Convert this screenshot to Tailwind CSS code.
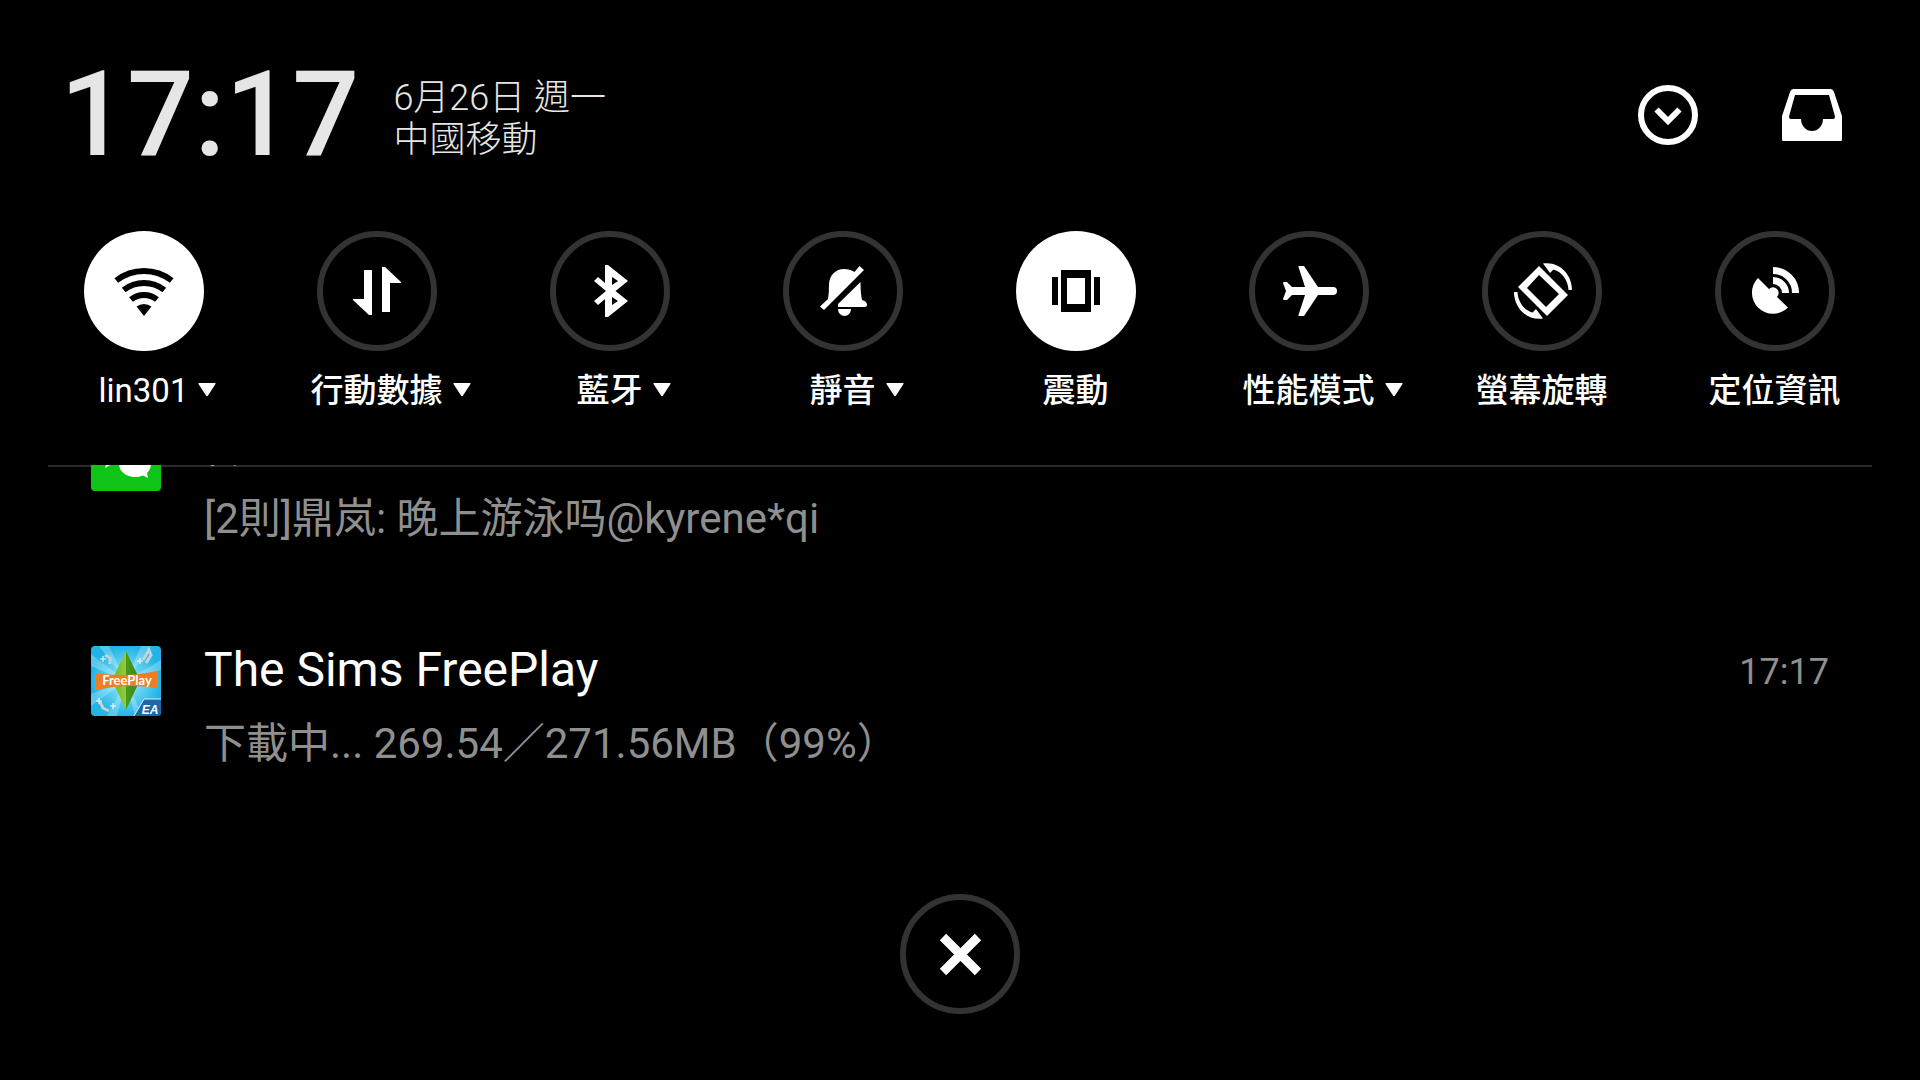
<!DOCTYPE html>
<html lang="zh-Hant">
<head>
    <meta charset="UTF-8">
    <meta name="viewport" content="width=device-width, initial-scale=1.0">
    <title>通知中心</title>
    <script src="https://cdn.jsdelivr.net/npm/@tailwindcss/browser@4"></script>
</head>
<body class="bg-black text-white font-[Roboto,'Noto_Sans_CJK_TC',sans-serif]">
    <div class="flex flex-col w-full min-h-screen overflow-hidden">

        <!-- Header -->
        <header class="flex items-center justify-between h-[231px] pl-[60px] pr-[78px] pb-0.5">
            <div class="flex items-center gap-[34px]">
                <time class="text-[118px] leading-[140px] font-medium text-[#e6e6e6]">17:17</time>
                <div class="pt-2 text-[36px] leading-[42px] font-light text-[#e6e6e6]">
                    <p>6月26日 週一</p>
                    <p>中國移動</p>
                </div>
            </div>
            <div class="flex items-center gap-[84px]">
                <button aria-label="展開">
                    <svg class="block w-[60px] h-[60px]" viewBox="0 0 60 60" fill="none" stroke="#fff" stroke-width="6">
                        <circle cx="30" cy="30" r="27"/>
                        <path d="M18.500 24.500L30 36L41.500 24.500"/>
                    </svg>
                </button>
                <button aria-label="通知匣">
                    <svg class="block w-[60px] h-[52px]" viewBox="0 0 60 52" fill="#fff" fill-rule="evenodd">
                        <path d="M12 0H48Q51 0 52 3L60 27V50.500Q60 52 58.500 52H1.500Q0 52 0 50.500V27L8 3Q9 0 12 0ZM13 6L7 27.500Q7 30 9 30H19A11 12 0 0 0 41 30H51Q53 30 53 27.500L47 6Z"/>
                    </svg>
                </button>
            </div>
        </header>

        <!-- Quick toggles -->
        <section class="grid grid-cols-8 pl-[27px] pr-[29px] pb-[52px] text-[33px] leading-[44px] font-medium">
            <button class="flex flex-col items-center gap-[18px]">
                <svg class="w-[120px] h-[120px] rounded-full bg-white" viewBox="0 0 120 120" fill="none" stroke="#000" stroke-width="6">
                    <path d="M32.300 49.500A45 45 0 0 1 87.700 49.500M39.700 59A33 33 0 0 1 80.300 59M47 68.500A21 21 0 0 1 73 68.500"/>
                    <path d="M60 85L52.600 75.500A12 12 0 0 1 67.400 75.500Z" fill="#000" stroke="none"/>
                </svg>
                <span class="relative font-normal whitespace-nowrap">lin301
                    <svg class="absolute left-full top-3.5 ml-2.5 w-[18px] h-[13px]" viewBox="0 0 18 13" fill="#fff"><path d="M1 0H17Q18 0 17.500 1L10 12.500Q9 13.500 8 12.500L.5 1Q0 0 1 0Z"/></svg>
                </span>
            </button>
            <button class="flex flex-col items-center gap-[18px]">
                <svg class="w-[120px] h-[120px] rounded-full border-6 border-[#333]" viewBox="6 6 108 108" fill="#fff">
                    <path d="M47 39H55V84H52L36 69V68H47ZM65 36H68L84 51V52H73V81H65Z"/>
                </svg>
                <span class="relative whitespace-nowrap">行動數據
                    <svg class="absolute left-full top-3.5 ml-2.5 w-[18px] h-[13px]" viewBox="0 0 18 13" fill="#fff"><path d="M1 0H17Q18 0 17.500 1L10 12.500Q9 13.500 8 12.500L.5 1Q0 0 1 0Z"/></svg>
                </span>
            </button>
            <button class="flex flex-col items-center gap-[18px]">
                <svg class="w-[120px] h-[120px] rounded-full border-6 border-[#333]" viewBox="6 6 108 108" fill="#fff" fill-rule="evenodd">
                    <path d="M55 34H58L78 50L65.500 60L78 70L58 86H55V68L48 74L44 70L56 60L44 50L48 46L55 52ZM62 46V54L68 50ZM62 66V74L68 70Z"/>
                </svg>
                <span class="relative whitespace-nowrap">藍牙
                    <svg class="absolute left-full top-3.5 ml-2.5 w-[18px] h-[13px]" viewBox="0 0 18 13" fill="#fff"><path d="M1 0H17Q18 0 17.500 1L10 12.500Q9 13.500 8 12.500L.5 1Q0 0 1 0Z"/></svg>
                </span>
            </button>
            <button class="flex flex-col items-center gap-[18px]">
                <svg class="w-[120px] h-[120px] rounded-full border-6 border-[#333]" viewBox="6 6 108 108" fill="#fff">
                    <path d="M45 68Q46 62 46 54C46 44 53 38 61 38Q67 38 71.500 41L76.500 35L81 39L41 79L37 75.500Z"/>
                    <path d="M77.500 51Q77.500 62 79 69Q84 70 84 74Q84 76 82 76H55V73Z"/>
                    <path d="M55 78H68A6.500 7 0 0 1 55 78Z"/>
                </svg>
                <span class="relative whitespace-nowrap">靜音
                    <svg class="absolute left-full top-3.5 ml-2.5 w-[18px] h-[13px]" viewBox="0 0 18 13" fill="#fff"><path d="M1 0H17Q18 0 17.500 1L10 12.500Q9 13.500 8 12.500L.5 1Q0 0 1 0Z"/></svg>
                </span>
            </button>
            <button class="flex flex-col items-center gap-[18px]">
                <svg class="w-[120px] h-[120px] rounded-full bg-white" viewBox="0 0 120 120" fill="#000" fill-rule="evenodd">
                    <path d="M36 46H42V74H36ZM78 46H84V74H78ZM45 39H75V81H45ZM51 47V73H69V47Z"/>
                </svg>
                <span class="whitespace-nowrap">震動</span>
            </button>
            <button class="flex flex-col items-center gap-[18px]">
                <svg class="w-[120px] h-[120px] rounded-full border-6 border-[#333]" viewBox="6 6 108 108" fill="#fff">
                    <path d="M50 35H55L69 56H84A4 4 0 0 1 84 64H69L55 85H50Q49 85 49.500 84L56 64H43L38 69H35Q34 69 34 68L37 60L34 52Q34 51 35 51H38L43 56H56L49.500 36Q49 35 50 35Z"/>
                </svg>
                <span class="relative whitespace-nowrap">性能模式
                    <svg class="absolute left-full top-3.5 ml-2.5 w-[18px] h-[13px]" viewBox="0 0 18 13" fill="#fff"><path d="M1 0H17Q18 0 17.500 1L10 12.500Q9 13.500 8 12.500L.5 1Q0 0 1 0Z"/></svg>
                </span>
            </button>
            <button class="flex flex-col items-center gap-[18px]">
                <svg class="w-[120px] h-[120px] rounded-full border-6 border-[#333]" viewBox="6 6 108 108" fill="#fff" fill-rule="evenodd">
                    <path d="M57 35L86 64L65 85L36 56ZM57 44L45 57L64 76L77 63Z"/>
                    <path d="M61 32.500C77 30 90 43 90 59H86.500C86 49 80 41 71.500 38.500L68 42Z"/>
                    <path d="M61 32.500C77 30 90 43 90 59H86.500C86 49 80 41 71.500 38.500L68 42Z" transform="rotate(180 61 60)"/>
                </svg>
                <span class="whitespace-nowrap">螢幕旋轉</span>
            </button>
            <button class="flex flex-col items-center gap-[18px]">
                <svg class="w-[120px] h-[120px] rounded-full border-6 border-[#333]" viewBox="6 6 108 108" fill="#fff">
                    <path d="M43 47L54 58A5.500 5.500 0 1 1 62 66L73 76.500A21 21 0 1 1 43 47Z"/>
                    <path d="M58 39.500A22.500 22.500 0 0 1 80.500 62M58 49.500A12.500 12.500 0 0 1 70.500 62" fill="none" stroke="#fff" stroke-width="7"/>
                </svg>
                <span class="whitespace-nowrap">定位資訊</span>
            </button>
        </section>

        <!-- Notifications, scrolled under the divider -->
        <main class="mx-12 border-t-2 border-[#2b2b2b]">
            <ul class="overflow-hidden px-[43px] -mt-0.5">
                <li class="flex gap-[43px] h-[225px] -mt-12">
                    <svg class="shrink-0 mt-1 w-[70px] h-[70px] rounded-sm" viewBox="0 0 70 70">
                        <rect width="70" height="70" fill="#0dc417"/>
                        <path d="M28 12C16 12 8 19 8 28C8 34 11 38 16 41L14 47L21 43Q24 44 28 44Z" fill="#fff"/>
                        <ellipse cx="28" cy="28" rx="20" ry="16" fill="#fff"/>
                        <ellipse cx="44" cy="43" rx="18" ry="15" fill="#0dc417"/>
                        <path d="M44 30C53 30 60 36 60 43C60 47 58 50 56 52L57 57L52 54.500Q48 56 44 56C35 56 28 50 28 43C28 36 35 30 44 30Z" fill="#fff"/>
                    </svg>
                    <div class="flex-1">
                        <h2 class="text-[48px] leading-[56px]">微</h2>
                        <p class="mt-[22px] text-[42px] leading-[48px] text-[#8f8f8f]">[2則]鼎岚: 晚上游泳吗@kyrene*qi</p>
                    </div>
                </li>
                <li class="flex gap-[43px] h-[225px]">
                    <svg class="shrink-0 mt-1 w-[70px] h-[70px] rounded-sm" viewBox="0 0 70 70">
                        <defs>
                            <radialGradient id="sky"><stop offset="0" stop-color="#a5f0fd"/><stop offset="1" stop-color="#22b4e6"/></radialGradient>
                            <linearGradient id="gem" x2="1" y2="0"><stop offset="0" stop-color="#6fb52a"/><stop offset=".5" stop-color="#94cc3a"/><stop offset=".5" stop-color="#4c9a1c"/><stop offset="1" stop-color="#2f8a1c"/></linearGradient>
                        </defs>
                        <rect width="70" height="70" fill="url(#sky)"/>
                        <path d="M35 35L0 8V20ZM35 35L18 0H8ZM35 35L50 0H60ZM35 35L70 14V24ZM35 35L0 60V48ZM35 35L16 70H26ZM35 35L52 70H44Z" fill="#fff" opacity=".25"/>
                        <path d="M35 5L49 34L35 64L21 34Z" fill="url(#gem)"/>
                        <path d="M14 9L19 12V18M52 14L58 4L60 9L55 17M9 56L12 62L18 65" fill="none" stroke="#c3d3d8" stroke-width="3"/>
                        <path d="M12 10V16M9 13H15M49 12V18M46 15H52M22 57V63M19 60H25M8 52V58M5 55H11" stroke="#fff"/>
                        <path d="M5 27Q35 32 66 25V42Q35 37 5 44Z" fill="#ef7d24"/>
                        <text x="36" y="39" text-anchor="middle" font-family="Lato, sans-serif" font-size="13" font-weight="700" fill="#fff">FreePlay</text>
                        <path d="M53 53H70V70H43Z" fill="#1c69a8"/>
                        <path d="M43 70L53 53H70" fill="none" stroke="#d8f2fa"/>
                        <text x="59" y="68" text-anchor="middle" font-family="Liberation Sans, sans-serif" font-size="12" font-style="italic" font-weight="700" fill="#fff">EA</text>
                    </svg>
                    <div class="flex-1">
                        <h2 class="text-[48px] leading-[56px]">The Sims FreePlay</h2>
                        <p class="mt-[22px] text-[42px] leading-[48px] text-[#8f8f8f]">下載中... 269.54／271.56MB（99%）</p>
                    </div>
                    <time class="text-[36px] leading-[60px] text-[#8f8f8f]">17:17</time>
                </li>
            </ul>
        </main>

        <!-- Clear all -->
        <footer class="flex justify-center pt-[27px]">
            <button aria-label="清除全部" class="w-[120px] h-[120px] rounded-full border-6 border-[#333]">
                <svg class="block w-[108px] h-[108px]" viewBox="6 6 108 108" fill="none" stroke="#fff" stroke-width="9">
                    <path d="M43 43L78 78M78 43L43 78"/>
                </svg>
            </button>
        </footer>
    </div>
</body>
</html>
